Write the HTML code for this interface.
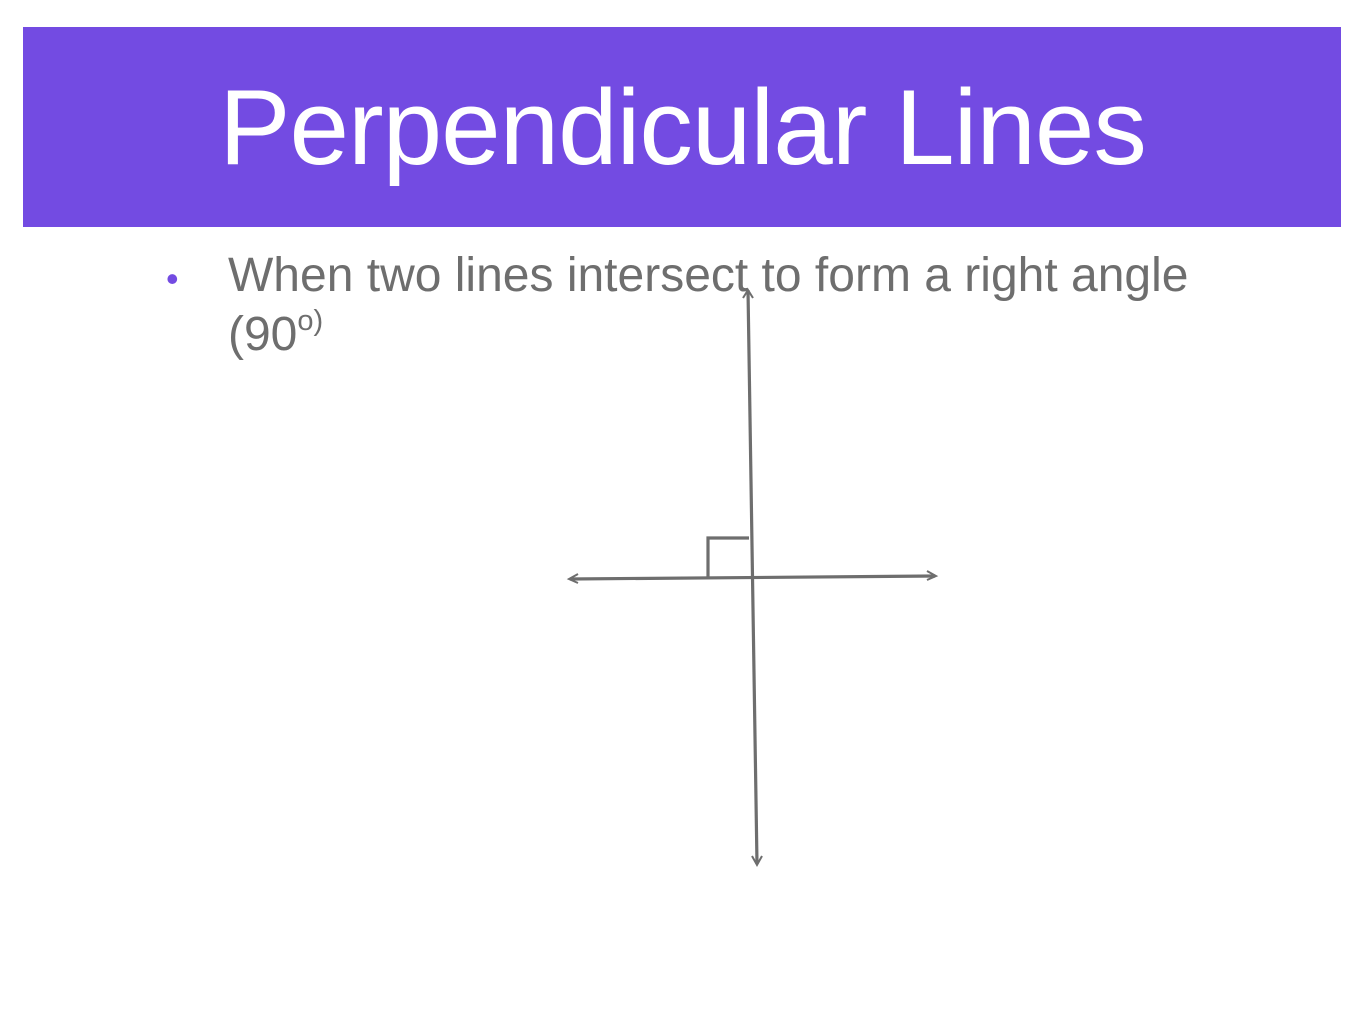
<!DOCTYPE html>
<html><head><style>
body{margin:0;width:1365px;height:1024px;background:#fff;position:relative;overflow:hidden;font-family:"Liberation Sans",Arial,sans-serif}
.ban{position:absolute;left:23px;top:27px;width:1318px;height:200px;background:#734be2}
.t{position:absolute;left:0;width:1365px;top:67px;text-align:center;color:#fff;font-size:107px;line-height:120px;letter-spacing:-1px}
.b{position:absolute;left:228px;top:246px;width:1050px;color:#6e6e6e;font-size:48px;line-height:59px}
.dot{position:absolute;left:166px;top:258px;color:#734be2;font-size:36px}
sup{font-size:29px;vertical-align:20px;line-height:0}
</style></head><body>
<div class="ban"></div>
<div class="t">Perpendicular Lines</div>
<div class="dot">•</div>
<div class="b">When two lines intersect to form a right angle (90<sup>o)</sup></div>
<svg style="position:absolute;left:0;top:0" width="1365" height="1024">
<g stroke="#6e6e6e" stroke-width="3.2" fill="none">
<line x1="748" y1="290" x2="757" y2="864"/>
<line x1="570" y1="579" x2="935" y2="576"/>
<polyline points="708,578 708,538 749,538"/>
<polyline points="743,298 748,290 753,298" stroke-width="2"/>
<polyline points="752,856 757,865 762,856" stroke-width="2"/>
<polyline points="578,574 569,579 578,583" stroke-width="2"/>
<polyline points="927,571 936,576 927,580" stroke-width="2"/>
</g></svg>
</body></html>
